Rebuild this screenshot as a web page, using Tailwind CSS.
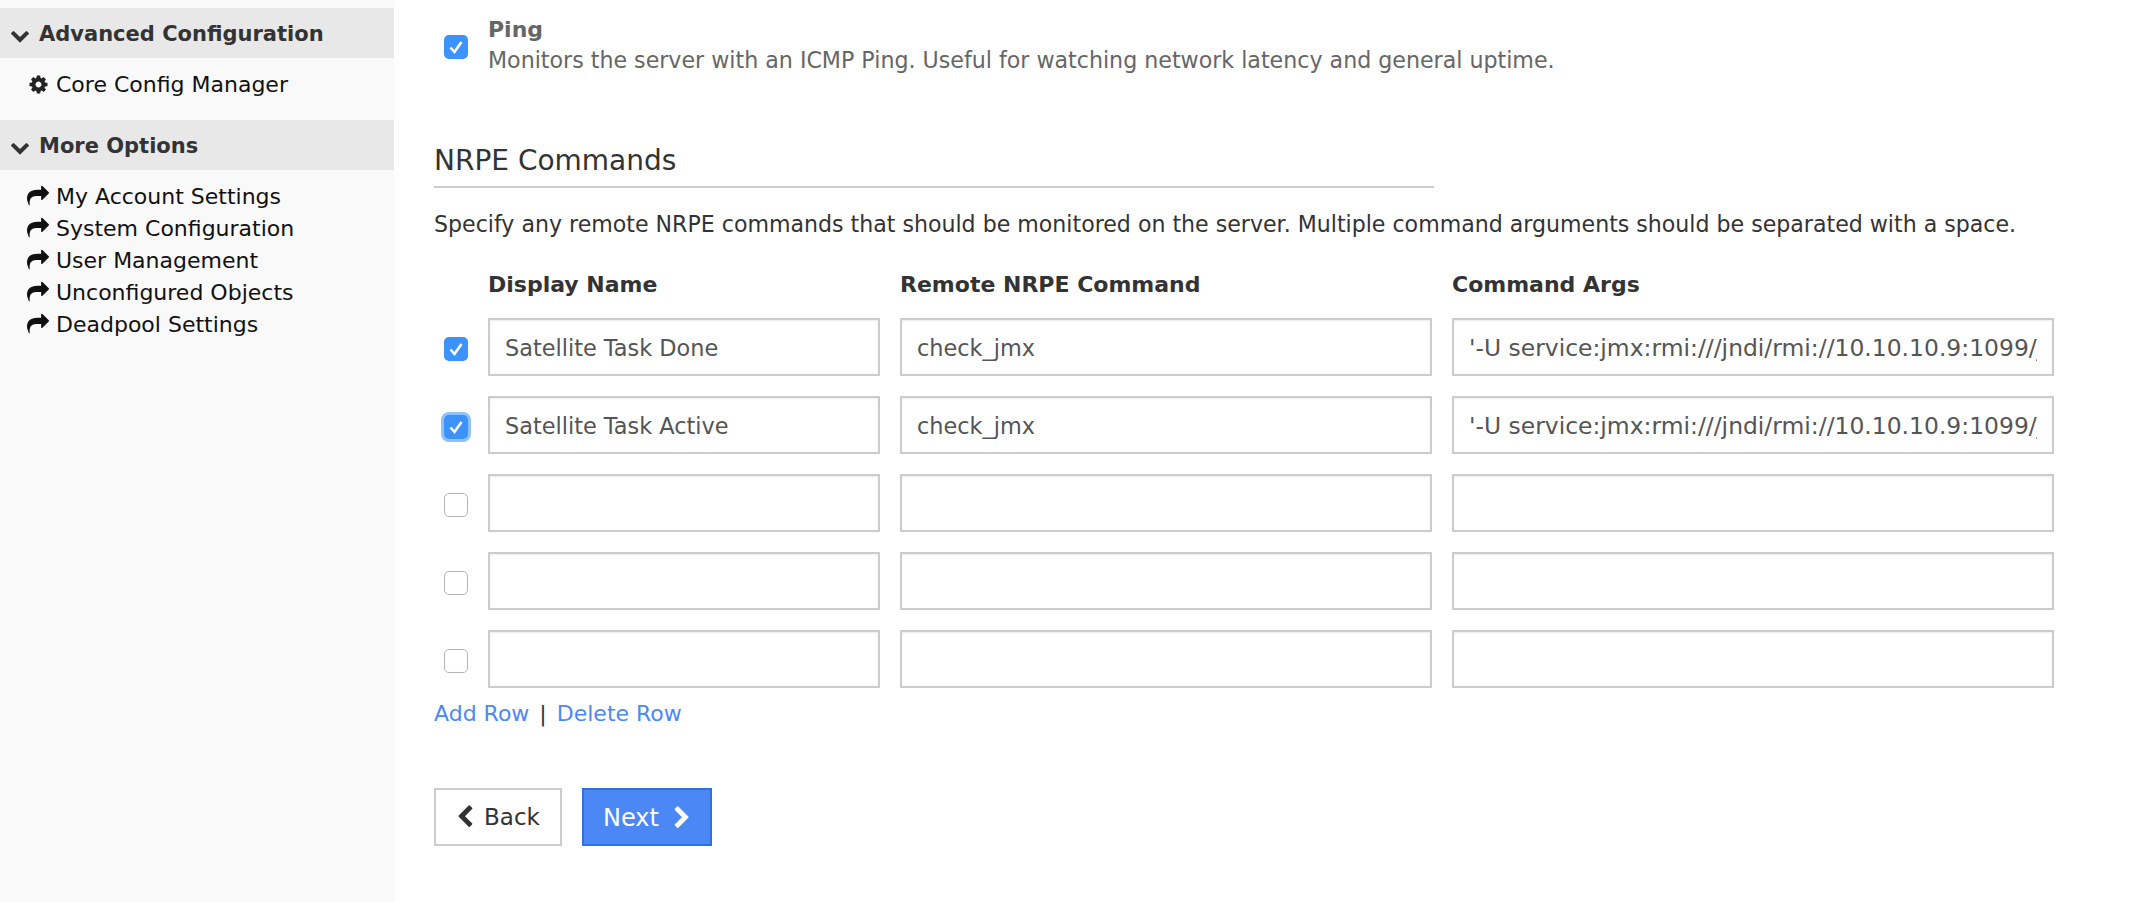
<!DOCTYPE html>
<html lang="en">
<head>
    <meta charset="utf-8">
    <meta name="viewport" content="width=device-width, initial-scale=1.0">
    <title>NRPE Commands</title>
    <script src="https://cdn.jsdelivr.net/npm/@tailwindcss/browser@4"></script>
</head>
<body class="bg-white h-[902px] overflow-hidden flex font-['DejaVu_Sans',sans-serif] text-[22px] text-[#333]">

    <svg class="hidden">
        <symbol id="chevron-down" viewBox="0 0 1792 1792"><path d="M1683 808l-742 741q-19 19-45 19t-45-19l-742-741q-19-19-19-45.5t19-45.5l166-165q19-19 45-19t45 19l531 531 531-531q19-19 45-19t45 19l166 165q19 19 19 45.5t-19 45.5z"/></symbol>
        <symbol id="cog" viewBox="0 0 1792 1792"><path d="M1152 896q0-106-75-181t-181-75-181 75-75 181 75 181 181 75 181-75 75-181zm512-109v222q0 12-8 23t-20 13l-185 28q-19 54-39 91 35 50 107 138 10 12 10 25t-9 23q-27 37-99 108t-94 71q-12 0-26-9l-138-108q-44 23-91 38-16 136-29 186-7 28-36 28h-222q-14 0-24.5-8.5t-11.5-21.5l-28-184q-49-16-90-37l-141 107q-10 9-25 9-14 0-25-11-126-114-165-168-7-10-7-23 0-12 8-23 15-21 51-66.5t54-70.5q-27-50-41-99l-183-27q-13-2-21-12.5t-8-23.5v-222q0-12 8-23t19-13l186-28q14-46 39-92-40-57-107-138-10-12-10-24 0-10 9-23 26-36 98.5-107.5t94.5-71.5q13 0 26 10l138 107q44-23 91-38 16-136 29-186 7-28 36-28h222q14 0 24.5 8.5t11.5 21.5l28 184q49 16 90 37l142-107q9-9 24-9 13 0 25 10 129 119 165 170 7 8 7 22 0 12-8 23-15 21-51 66.5t-54 70.5q26 50 41 98l183 28q13 2 21 12.5t8 23.5z"/></symbol>
        <symbol id="share" viewBox="0 0 1792 1792"><path d="M1792 640q0 26-19 45l-512 512q-19 19-45 19t-45-19-19-45v-256h-224q-98 0-175.5 6t-154 21.5-133 42.5-105.5 69.5-80 101-48.5 138.5-17.5 181q0 55 5 123 0 6 2.5 23.5t2.5 26.5q0 15-8.5 25t-23.5 10q-16 0-28-17-7-9-13-22t-13.5-30-10.5-24q-127-285-127-451 0-199 53-333 162-403 875-403h224v-256q0-26 19-45t45-19 45 19l512 512q19 19 19 45z"/></symbol>
        <symbol id="chevron-left" viewBox="0 0 1792 1792"><path d="M1427 301l-531 531 531 531q19 19 19 45t-19 45l-166 166q-19 19-45 19t-45-19l-742-742q-19-19-19-45t19-45l742-742q19-19 45-19t45 19l166 166q19 19 19 45t-19 45z"/></symbol>
        <symbol id="chevron-right" viewBox="0 0 1792 1792"><path d="M1363 877l-742 742q-19 19-45 19t-45-19l-166-166q-19-19-19-45t19-45l531-531-531-531q-19-19-19-45t19-45l166-166q19-19 45-19t45 19l742 742q19 19 19 45t-19 45z"/></symbol>
        <symbol id="check" viewBox="0 0 24 24"><path d="M6.5 12.5l4 4.5 7-10" fill="none" stroke="white" stroke-width="2.6"/></symbol>
    </svg>

    <!-- sidebar -->
    <aside class="w-[394px] shrink-0 bg-[#f9f9f9] pt-2 text-[#111]">
        <div class="h-[50px] pt-[4px] bg-[#e8e8e8] flex items-center pl-[10px] gap-[9px] font-bold text-[21px] text-[#333]">
            <svg class="w-[20px] h-[20px] fill-[#333]"><use href="#chevron-down"/></svg>
            <span>Advanced Configuration</span>
        </div>
        <ul class="pt-[10px] h-[62px]">
            <li class="h-8 flex items-center pl-[28px] gap-[7px]">
                <svg class="w-[21px] h-[21px] fill-[#222]"><use href="#cog"/></svg>
                <span>Core Config Manager</span>
            </li>
        </ul>
        <div class="h-[50px] pt-[4px] bg-[#e8e8e8] flex items-center pl-[10px] gap-[9px] font-bold text-[21px] text-[#333]">
            <svg class="w-[20px] h-[20px] fill-[#333]"><use href="#chevron-down"/></svg>
            <span>More Options</span>
        </div>
        <ul class="pt-[10px]">
            <li class="h-8 flex items-center pl-[27px] gap-[7px]"><svg class="w-[22px] h-[22px] fill-[#111]"><use href="#share"/></svg><span>My Account Settings</span></li>
            <li class="h-8 flex items-center pl-[27px] gap-[7px]"><svg class="w-[22px] h-[22px] fill-[#111]"><use href="#share"/></svg><span>System Configuration</span></li>
            <li class="h-8 flex items-center pl-[27px] gap-[7px]"><svg class="w-[22px] h-[22px] fill-[#111]"><use href="#share"/></svg><span>User Management</span></li>
            <li class="h-8 flex items-center pl-[27px] gap-[7px]"><svg class="w-[22px] h-[22px] fill-[#111]"><use href="#share"/></svg><span>Unconfigured Objects</span></li>
            <li class="h-8 flex items-center pl-[27px] gap-[7px]"><svg class="w-[22px] h-[22px] fill-[#111]"><use href="#share"/></svg><span>Deadpool Settings</span></li>
        </ul>
    </aside>

    <!-- main -->
    <main class="flex-1 pl-[40px] pt-[15px]">
        <div class="flex items-start h-[60px] text-[#666]">
            <span class="w-6 h-6 ml-[10px] mt-[20px] rounded-[5px] bg-[#3b93fb] flex"><svg class="w-6 h-6"><use href="#check"/></svg></span>
            <div class="ml-[21px] -translate-x-[1px] leading-[30px]">
                <div class="font-bold">Ping</div>
                <div class="text-[22.15px]">Monitors the server with an ICMP Ping. Useful for watching network latency and general uptime.</div>
            </div>
        </div>

        <h2 class="w-[1000px] mt-[67px] h-[46px] border-b-2 border-[#ccc] text-[28px] leading-[38px]">NRPE Commands</h2>
        <p class="mt-[21px] leading-[30px] text-[22.1px]">Specify any remote NRPE commands that should be monitored on the server. Multiple command arguments should be separated with a space.</p>

        <div class="mt-[23px] w-[1620px]">
            <div class="flex gap-[20px] h-[44px] mb-[12px] items-center font-bold pl-[54px]">
                <span class="w-[392px]">Display Name</span>
                <span class="w-[532px]">Remote NRPE Command</span>
                <span class="w-[602px]">Command Args</span>
            </div>

            <div class="flex flex-col gap-[20px] pl-[10px]">
                <div class="flex items-center h-[58px]">
                    <span class="w-6 h-6 mt-1 rounded-[5px] bg-[#3b93fb] flex mr-[20px]"><svg class="w-6 h-6"><use href="#check"/></svg></span>
                    <input class="w-[392px] h-[58px] px-[15px] pt-[2px] border-2 border-[#ccc] text-[22.4px] text-[#555] shadow-[inset_0_1px_2px_rgba(0,0,0,0.08)]" value="Satellite Task Done">
                    <input class="w-[532px] h-[58px] ml-[20px] px-[15px] pt-[2px] border-2 border-[#ccc] text-[22.4px] text-[#555] shadow-[inset_0_1px_2px_rgba(0,0,0,0.08)]" value="check_jmx">
                    <input class="w-[602px] h-[58px] ml-[20px] px-[15px] pt-[2px] border-2 border-[#ccc] text-[23.45px] text-[#555] shadow-[inset_0_1px_2px_rgba(0,0,0,0.08)]" value="'-U service:jmx:rmi:///jndi/rmi://10.10.10.9:1099/jmxrmi' -O">
                </div>
                <div class="flex items-center h-[58px]">
                    <span class="w-6 h-6 mt-1 rounded-[5px] bg-[#3b93fb] flex mr-[20px] shadow-[0_0_0_3px_#8fc2fb]"><svg class="w-6 h-6"><use href="#check"/></svg></span>
                    <input class="w-[392px] h-[58px] px-[15px] pt-[2px] border-2 border-[#ccc] text-[22.4px] text-[#555] shadow-[inset_0_1px_2px_rgba(0,0,0,0.08)]" value="Satellite Task Active">
                    <input class="w-[532px] h-[58px] ml-[20px] px-[15px] pt-[2px] border-2 border-[#ccc] text-[22.4px] text-[#555] shadow-[inset_0_1px_2px_rgba(0,0,0,0.08)]" value="check_jmx">
                    <input class="w-[602px] h-[58px] ml-[20px] px-[15px] pt-[2px] border-2 border-[#ccc] text-[23.45px] text-[#555] shadow-[inset_0_1px_2px_rgba(0,0,0,0.08)]" value="'-U service:jmx:rmi:///jndi/rmi://10.10.10.9:1099/jmxrmi' -O">
                </div>
                <div class="flex items-center h-[58px]">
                    <span class="w-6 h-6 mt-1 rounded-[5px] bg-white border border-[#b5b5b5] mr-[20px]"></span>
                    <input class="w-[392px] h-[58px] px-[15px] border-2 border-[#ccc] shadow-[inset_0_1px_2px_rgba(0,0,0,0.08)]">
                    <input class="w-[532px] h-[58px] ml-[20px] px-[15px] border-2 border-[#ccc] shadow-[inset_0_1px_2px_rgba(0,0,0,0.08)]">
                    <input class="w-[602px] h-[58px] ml-[20px] px-[15px] border-2 border-[#ccc] shadow-[inset_0_1px_2px_rgba(0,0,0,0.08)]">
                </div>
                <div class="flex items-center h-[58px]">
                    <span class="w-6 h-6 mt-1 rounded-[5px] bg-white border border-[#b5b5b5] mr-[20px]"></span>
                    <input class="w-[392px] h-[58px] px-[15px] border-2 border-[#ccc] shadow-[inset_0_1px_2px_rgba(0,0,0,0.08)]">
                    <input class="w-[532px] h-[58px] ml-[20px] px-[15px] border-2 border-[#ccc] shadow-[inset_0_1px_2px_rgba(0,0,0,0.08)]">
                    <input class="w-[602px] h-[58px] ml-[20px] px-[15px] border-2 border-[#ccc] shadow-[inset_0_1px_2px_rgba(0,0,0,0.08)]">
                </div>
                <div class="flex items-center h-[58px]">
                    <span class="w-6 h-6 mt-1 rounded-[5px] bg-white border border-[#b5b5b5] mr-[20px]"></span>
                    <input class="w-[392px] h-[58px] px-[15px] border-2 border-[#ccc] shadow-[inset_0_1px_2px_rgba(0,0,0,0.08)]">
                    <input class="w-[532px] h-[58px] ml-[20px] px-[15px] border-2 border-[#ccc] shadow-[inset_0_1px_2px_rgba(0,0,0,0.08)]">
                    <input class="w-[602px] h-[58px] ml-[20px] px-[15px] border-2 border-[#ccc] shadow-[inset_0_1px_2px_rgba(0,0,0,0.08)]">
                </div>
            </div>
        </div>

        <div class="mt-[11px] leading-[30px]">
            <a href="#" class="text-[#4d88f5]">Add Row</a> <span class="mx-[3px]">|</span> <a href="#" class="text-[#4d88f5]">Delete Row</a>
        </div>

        <div class="mt-[59px] flex gap-[20px]">
            <button class="w-[128px] h-[58px] pr-[3px] border-2 border-[#ccc] bg-white flex items-center justify-center gap-[7px] text-[23px]">
                <svg class="w-[24px] h-[24px] fill-[#333]"><use href="#chevron-left"/></svg>
                <span>Back</span>
            </button>
            <button class="w-[130px] h-[58px] pl-[3px] pt-[1px] border-2 border-[#2f70e8] bg-[#4c87f6] text-white flex items-center justify-center gap-[11px] text-[24px]">
                <span>Next</span>
                <svg class="w-[24px] h-[24px] fill-white"><use href="#chevron-right"/></svg>
            </button>
        </div>
    </main>

</body>
</html>
